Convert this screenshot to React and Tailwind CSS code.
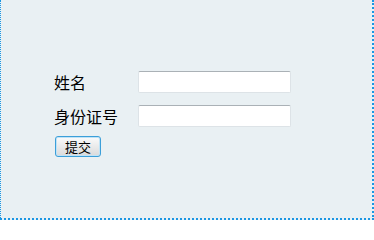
import React from 'react';

// simple login-ish form: name + ID number
function Field({ label }) {
    return (
        <div className="flex items-center h-[22px]">
            <label className="w-[84px] text-[16px] leading-none text-black">{label}</label>
            <input
                type="text"
                className="w-[153px] h-[22px] bg-white border border-[#dde3e7] border-t-[#aab1b6] rounded-[2px] outline-none px-1 text-[13px]"
            />
        </div>
    );
}

export default function App() {
    return (
        <div
            className="w-[374px] h-[220px] bg-[#e9f0f3] border-l border-r-2 border-b-2 border-dotted border-[#1b96e3]"
            style={{ fontFamily: '"Noto Sans CJK SC", "Noto Sans", sans-serif' }}
        >
            <form className="pt-[71px] pl-[53px] flex flex-col gap-3" onSubmit={(e) => e.preventDefault()}>
                <Field label="姓名" />
                <Field label="身份证号" />
                <div className="-mt-[3px] flex">
                    <button
                        type="submit"
                        className="block ml-px w-[46px] h-[21px] rounded-[3px] border border-[#3c9fd9] bg-gradient-to-b from-[#fbfbfb] to-[#d9dadb] text-[13px] leading-none text-black shadow-[inset_0_0_0_1px_#bfe3f7]"
                    >
                        提交
                    </button>
                </div>
            </form>
        </div>
    );
}
